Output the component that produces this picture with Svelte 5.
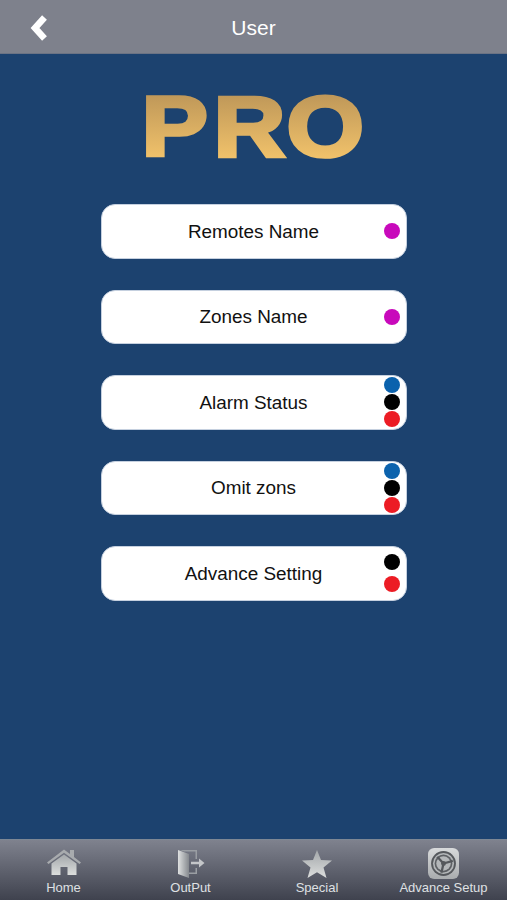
<script>
  const rows = [
    { label: 'Remotes Name', dots: ['m'], kind: 'one' },
    { label: 'Zones Name', dots: ['m'], kind: 'one' },
    { label: 'Alarm Status', dots: ['b', 'k', 'r'], kind: 'three' },
    { label: 'Omit zons', dots: ['b', 'k', 'r'], kind: 'three' },
    { label: 'Advance Setting', dots: ['k', 'r'], kind: 'two' }
  ];
</script>

<div class="page">
  <header class="top">
    <svg class="back" viewBox="0 0 20 28" width="20" height="28" aria-hidden="true">
      <path d="M14.5 3.5 L5 14 L14.5 24.5" fill="none" stroke="#fff" stroke-width="6.5" stroke-linejoin="miter"/>
    </svg>
    <span class="title">User</span>
  </header>

  <main class="content">
    <svg class="logo" viewBox="0 0 240 80" width="240" height="80" role="img" aria-label="PRO">
      <defs>
        <linearGradient id="gold" gradientUnits="userSpaceOnUse" x1="0" y1="4" x2="0" y2="72">
          <stop offset="0" stop-color="#bd9658"/>
          <stop offset="1" stop-color="#f2c36b"/>
        </linearGradient>
      </defs>
      <text transform="scale(1.165 1)" x="6.4 68.2 131" y="67.5" class="logotext" fill="url(#gold)" stroke="url(#gold)" stroke-width="3.6">PRO</text>
    </svg>

    <div class="list">
      {#each rows as row}
        <button class="row" type="button">
          <span class="label">{row.label}</span>
          <span class="dots {row.kind}">
            {#each row.dots as d}
              <i class="dot {d}"></i>
            {/each}
          </span>
        </button>
      {/each}
    </div>
  </main>

  <nav class="tabs">
    <div class="tab">
      <svg viewBox="0 2 36 30" width="36" height="30" aria-hidden="true">
        <defs>
          <linearGradient id="ico" x1="0" y1="0" x2="0" y2="1">
            <stop offset="0" stop-color="#a3a7aa"/>
            <stop offset="1" stop-color="#dcdedd"/>
          </linearGradient>
        </defs>
        <path d="M1 15.5 L18 2.5 L24 7 L24 3 L28 3 L28 10 L35 15.5 L33.5 17 L18 5.8 L2.5 17 Z" fill="#a8abae"/>
        <path d="M5.5 16.5 L18 7.5 L30.5 16.5 L30.5 28 L21.5 28 L21.5 20 L14.5 20 L14.5 28 L5.5 28 Z" fill="url(#ico)"/>
      </svg>
      <span>Home</span>
    </div>
    <div class="tab">
      <svg viewBox="0 0 30 30" width="30" height="30" aria-hidden="true">
        <defs>
          <linearGradient id="door" x1="0" y1="0" x2="1" y2="0">
            <stop offset="0" stop-color="#dfe1e1"/>
            <stop offset="1" stop-color="#85898e"/>
          </linearGradient>
        </defs>
        <path d="M2 1 L13 5 L13 29 L2 25 Z" fill="url(#door)"/>
        <path d="M4 1 H21 V10 H19.5 V2.5 H8 Z M19.5 19 H21 V25 H13 V23.5 H19.5 Z" fill="#9a9ea3"/>
        <path d="M15 12.7 H23 V9.5 L28.5 14 L23 18.5 V15.3 H15 Z" fill="#c4c6c9"/>
      </svg>
      <span>OutPut</span>
    </div>
    <div class="tab">
      <svg viewBox="0 0 32 30" width="32" height="30" aria-hidden="true">
        <path d="M16 1 L20 11 L31 11.5 L22.5 18.5 L25.5 29 L16 23.2 L6.5 29 L9.5 18.5 L1 11.5 L12 11 Z" fill="url(#ico)"/>
      </svg>
      <span>Special</span>
    </div>
    <div class="tab">
      <svg viewBox="0 0 30 30" width="31" height="31" aria-hidden="true">
        <defs>
          <linearGradient id="tile" x1="0" y1="0" x2="0" y2="1">
            <stop offset="0" stop-color="#d8dadb"/>
            <stop offset="1" stop-color="#a9acae"/>
          </linearGradient>
        </defs>
        <rect x="0" y="0" width="30" height="30" rx="6" fill="url(#tile)"/>
        <circle cx="15" cy="15" r="12" fill="#55585c"/>
        <circle cx="15" cy="15" r="10.2" fill="#b4b7b9"/>
        <circle cx="15" cy="15" r="8.6" fill="#5d6064"/>
        <circle cx="15" cy="15" r="7" fill="#b4b7b9"/>
        <path d="M15 15 L9 8.5 M15 15 L24 12.5 M15 15 L13 24" stroke="#55585c" stroke-width="2.2"/>
        <circle cx="15" cy="15" r="2.4" fill="#55585c"/>
      </svg>
      <span>Advance Setup</span>
    </div>
  </nav>
</div>

<style>
  :global(body) {
    margin: 0;
  }

  .page {
    width: 507px;
    height: 900px;
    display: flex;
    flex-direction: column;
    background: #1c426f;
    font-family: "Liberation Sans", Arial, sans-serif;
    overflow: hidden;
  }

  .top {
    height: 54px;
    box-sizing: border-box;
    flex: none;
    padding-top: 3px;
    background: #7e818c;
    border-bottom: 1px solid #6b7384;
    display: flex;
    align-items: center;
    justify-content: center;
    position: relative;
  }

  .back {
    position: absolute;
    left: 30px;
    top: 14px;
  }

  .title {
    color: #fff;
    font-size: 21px;
  }

  .content {
    flex: 1;
    min-height: 0;
    display: flex;
    flex-direction: column;
    align-items: center;
  }

  .logo {
    display: block;
    margin-top: 34px;
    flex: none;
    overflow: visible;
  }

  .logotext {
    font-family: "Liberation Sans", Arial, sans-serif;
    font-weight: 700;
    font-size: 85.5px;
  }

  .list {
    margin-top: 36px;
    display: flex;
    flex-direction: column;
    gap: 31px;
  }

  .row {
    position: relative;
    width: 306px;
    height: 54.5px;
    padding: 0;
    box-sizing: border-box;
    background: #fff;
    border: 1px solid #c5d0df;
    border-radius: 14px;
    color: #111;
    font: 400 18.9px "Liberation Sans", Arial, sans-serif;
    display: flex;
    align-items: center;
    justify-content: center;
  }

  .label {
    padding-top: 1px;
  }

  .dots {
    position: absolute;
    right: 6px;
    top: 0;
    bottom: 0;
    display: flex;
    flex-direction: column;
    align-items: center;
    justify-content: center;
  }

  .dots.three {
    gap: 1px;
  }

  .dots.two {
    gap: 6px;
  }

  .dot {
    display: block;
    width: 16px;
    height: 16px;
    border-radius: 50%;
  }

  .m { background: #c809bb; }
  .b { background: #0b62ad; }
  .k { background: #000; }
  .r { background: #ec1c24; }

  .tabs {
    height: 61px;
    flex: none;
    box-sizing: border-box;
    border-top: 1px solid #7d8794;
    background: linear-gradient(#7f828e, #3f424e);
    display: grid;
    grid-template-columns: 127px 127px 126px 127px;
  }

  .tab {
    display: flex;
    flex-direction: column;
    align-items: center;
    justify-content: flex-end;
    gap: 1px;
    padding-bottom: 5px;
    color: #dfe0e3;
    font-size: 13px;
    position: relative;
  }

  .tab svg {
    display: block;
  }
</style>
